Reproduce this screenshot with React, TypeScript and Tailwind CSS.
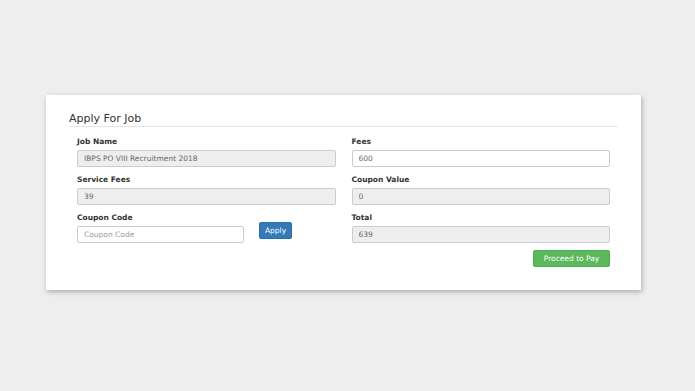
import React from 'react';

const font = { fontFamily: '"DejaVu Sans", Verdana, sans-serif' };

function Field({
  label,
  value,
  disabled,
}: {
  label: string;
  value: string;
  disabled?: boolean;
}) {
  return (
    <div className="flex flex-col">
      <label className="text-[7.5px] leading-[10px] font-bold text-[#333] mb-[3px]">{label}</label>
      <input
        readOnly
        value={value}
        className={`h-[17px] w-full rounded-[2px] border border-[#cccccc] px-[6px] text-[7.5px] text-[#666] outline-none ${
          disabled ? 'bg-[#eeeeee]' : 'bg-white'
        }`}
      />
    </div>
  );
}

export default function App() {
  return (
    <div className="min-h-[391px] w-[695px] bg-[#eeeeee] pt-[95px] pl-[46px]" style={font}>
      <div className="w-[595px] h-[195px] bg-white shadow-[1px_2px_5px_rgba(0,0,0,0.28)] px-[23px]">
        <div className="h-[32px] pt-[16px] border-b border-[#e5e5e5]">
          <h2 className="text-[11px] leading-[15px] text-[#333]">Apply For Job</h2>
        </div>

        <div className="px-[8px] pt-[10px]">
          <div className="grid grid-cols-2 gap-x-[16px] gap-y-[8px]">
            <Field label="Job Name" value="IBPS PO VIII Recruitment 2018" disabled />
            <Field label="Fees" value="600" />
            <Field label="Service Fees" value="39" disabled />
            <Field label="Coupon Value" value="0" disabled />

            <div className="flex items-end gap-[15px]">
              <div className="flex flex-col w-[167px]">
                <label className="text-[7.5px] leading-[10px] font-bold text-[#333] mb-[3px]">Coupon Code</label>
                <input
                  placeholder="Coupon Code"
                  className="h-[17px] w-full rounded-[2px] border border-[#cccccc] bg-white px-[6px] text-[7.5px] text-[#666] placeholder:text-[#999] outline-none"
                />
              </div>
              <button className="mb-[4px] h-[17px] w-[33px] rounded-[2px] border border-[#2e6da4] bg-[#337ab7] text-[7.5px] text-white">
                Apply
              </button>
            </div>
            <Field label="Total" value="639" disabled />
          </div>

          <div className="flex justify-end mt-[7px] pr-[0px]">
            <button className="h-[17px] w-[77px] rounded-[2px] border border-[#4cae4c] bg-[#5cb85c] text-[7.5px] text-white">
              Proceed to Pay
            </button>
          </div>
        </div>
      </div>
    </div>
  );
}
